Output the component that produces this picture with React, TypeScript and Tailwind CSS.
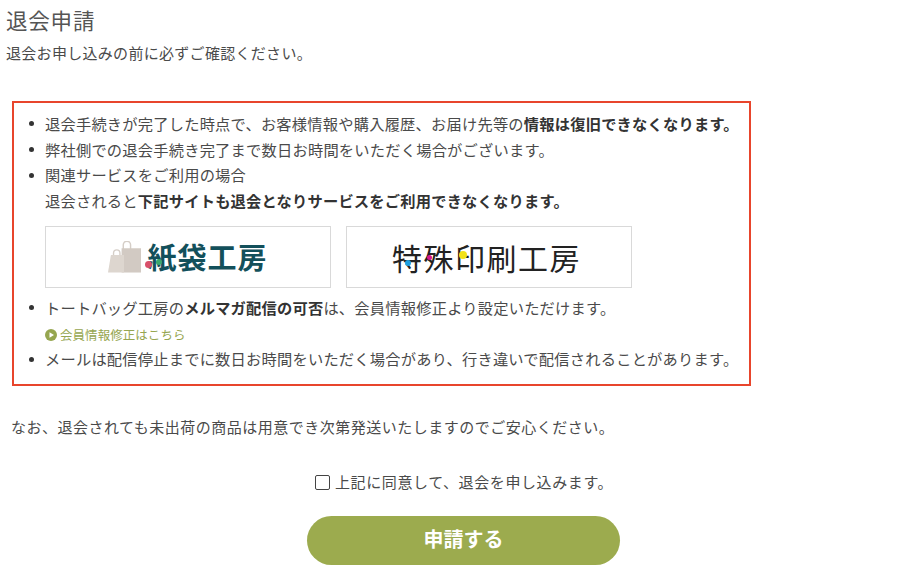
import { useState } from "react"

const jp = "font-['Noto_Sans_CJK_JP','Noto_Sans',sans-serif]"

function Bullet({ children }: { children: React.ReactNode }) {
  return (
    <li className="flex">
      <span className="flex h-[25.7px] w-[31px] shrink-0 items-center pl-[15px]">
        <span className="h-[5px] w-[5px] rounded-full bg-[#333]" />
      </span>
      <div className="min-w-0 whitespace-nowrap">{children}</div>
    </li>
  )
}

function BagLogo() {
  return (
    <div className="flex h-[62px] w-[286px] items-center justify-center border border-[#d9d9d9] bg-white">
      <svg width="33" height="32" viewBox="0 0 34 32" className="mr-[6px]">
        <path d="M15 3.500a4.500 4.500 0 0 1 9 0V8h-1.500V3.500a3 3 0 0 0-6 0V8H15z" fill="#d5cec7" />
        <path d="M5 12a4 4 0 0 1 8 0v3h-1.400v-3a2.600 2.600 0 0 0-5.200 0v3H5z" fill="#d5cec7" />
        <rect x="14" y="7" width="20" height="25" fill="#d2cac3" />
        <path d="M3 14h13.500v18H0z" fill="#ddd6cf" />
      </svg>
      <div className="relative h-[29px]">
        <span className={`${jp} block text-[29px] leading-[29px] font-bold tracking-[1px] text-[#13505b]`}>紙袋工房</span>
        <span className="absolute top-[19px] left-[-2px] h-[7px] w-[7px] rounded-full bg-[#d9506a]" />
        <span className="absolute top-[17px] left-[9px] h-[6px] w-[6px] rounded-full bg-[#3aa76d]" />
      </div>
    </div>
  )
}

function PrintLogo() {
  return (
    <div className="flex h-[62px] w-[286px] items-center justify-center border border-[#d9d9d9] bg-white">
      <div className="relative mr-[5px] h-[30px]">
        <span className={`${jp} block text-[30px] leading-[30px] tracking-[1.5px] text-[#222]`}>特殊印刷工房</span>
        <span className="absolute top-[18px] left-[13px] h-[6px] w-[6px] rounded-full bg-[#1e9fe0]" />
        <span className="absolute top-[13px] left-[35px] h-[5px] w-[5px] rounded-full bg-[#d6178c]" />
        <span className="absolute top-[9px] left-[67px] h-[8px] w-[8px] rounded-full bg-[#f2e21b]" />
      </div>
    </div>
  )
}

export default function App() {
  const [agreed, setAgreed] = useState(false)

  return (
    <div className={`${jp} h-[587px] w-[914px] overflow-hidden bg-white text-[#4a4a4a]`}>
      {/* Header */}
      <div className="px-[6px] pt-[6px]">
        <h1 className="text-[21.500px] leading-[28px] tracking-[0.8px] text-[#555]">退会申請</h1>
        <p className="mt-[6px] text-[15px] leading-[26px] tracking-[0.3px]">退会お申し込みの前に必ずご確認ください。</p>
      </div>

      {/* Notice box */}
      <div className="mt-[35px] ml-[12px] h-[285px] w-[739px] border-2 border-[#e8452c] pt-[8px]">
        <ul className="text-[15.270px] leading-[25.700px] tracking-[0.2px]">
          <Bullet>
            退会手続きが完了した時点で、お客様情報や購入履歴、お届け先等の
            <b className="font-bold text-[#333]">情報は復旧できなくなります。</b>
          </Bullet>
          <Bullet>弊社側での退会手続き完了まで数日お時間をいただく場合がございます。</Bullet>
          <Bullet>
            関連サービスをご利用の場合
            <br />
            退会されると<b className="font-bold text-[#333]">下記サイトも退会となりサービスをご利用できなくなります。</b>
          </Bullet>
        </ul>
        <div className="mt-[12px] mb-[7px] ml-[31px] flex gap-[15px]">
          <BagLogo />
          <PrintLogo />
        </div>
        <ul className="text-[15.270px] leading-[25.700px] tracking-[0.2px]">
          <Bullet>
            トートバッグ工房の<b className="font-bold text-[#333]">メルマガ配信の可否</b>は、会員情報修正より設定いただけます。
          </Bullet>
          <li className="flex h-[25.700px] items-center gap-[3px] pt-[3px] pl-[31px] text-[12.500px] tracking-[0.05px] text-[#96a650]">
            <svg width="12" height="12" viewBox="0 0 12 12">
              <circle cx="6" cy="6" r="6" fill="#96a650" />
              <path d="M4.500 3.200v5.600L9 6z" fill="#fff" />
            </svg>
            会員情報修正はこちら
          </li>
          <Bullet>メールは配信停止までに数日お時間をいただく場合があり、行き違いで配信されることがあります。</Bullet>
        </ul>
      </div>

      <p className="mt-[28px] ml-[11px] text-[15px] leading-[26px] tracking-[0.5px]">
        なお、退会されても未出荷の商品は用意でき次第発送いたしますのでご安心ください。
      </p>

      <label className="mt-[29px] ml-[315px] flex items-center text-[15px] leading-[26px] tracking-[0.6px]">
        <input
          type="checkbox"
          checked={agreed}
          onChange={(e) => setAgreed(e.target.checked)}
          className="mr-[5px] h-[15px] w-[15px] appearance-none rounded-[2px] border border-[#444] bg-white checked:bg-[#96a650]"
        />
        上記に同意して、退会を申し込みます。
      </label>

      <div className="mt-[21px] ml-[307px]">
        <button
          type="button"
          className="h-[49px] w-[313px] rounded-full bg-[#9cab4e] pb-[4px] text-[20px] font-bold text-white"
        >
          申請する
        </button>
      </div>
    </div>
  )
}
